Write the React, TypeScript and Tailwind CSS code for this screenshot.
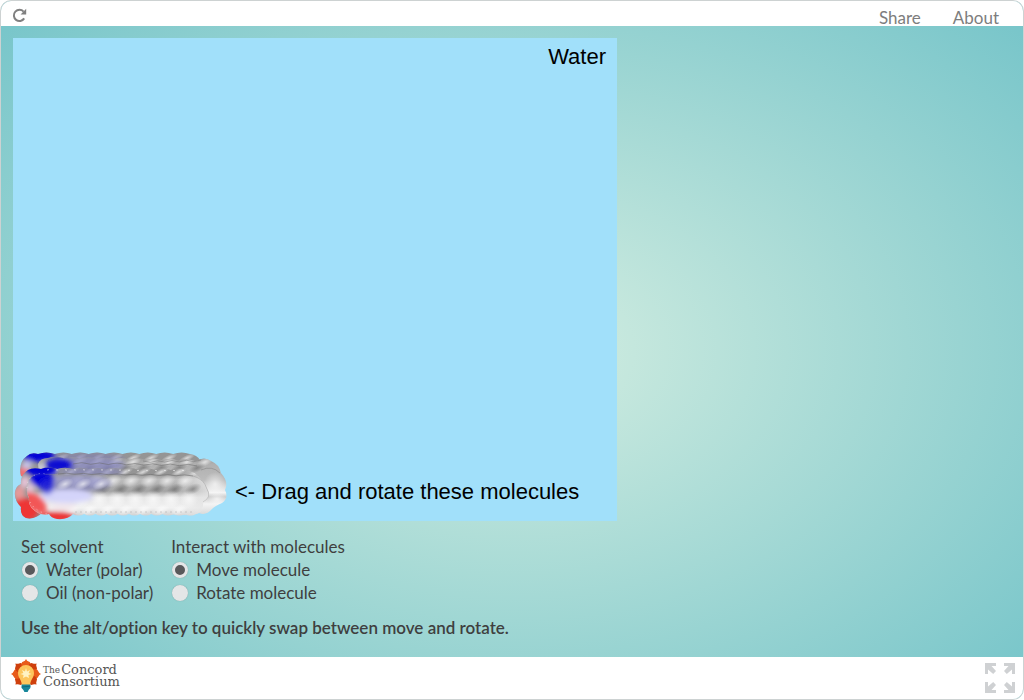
import React, { useState } from "react";

type Point = [number, number];

// Bumpy run between two points, made of small arcs.
function bumps(from: Point, to: Point, count: number, height: number) {
  const dx = (to[0] - from[0]) / count;
  const dy = (to[1] - from[1]) / count;
  return Array.from({ length: count }, () => `q${dx / 2} ${dy / 2 + height} ${dx} ${dy}`).join(" ");
}

const shapes = {
  far: `M8 26 Q5 12 14 6 Q18 2 25 4 ${bumps([25, 4], [177, 4], 9, -3)} Q184 5 187 10 L190 30 L30 34 Z`,
  back: `M25 14 Q27 8 35 8 ${bumps([35, 8], [182, 11], 9, -3)} Q192 6 198 11 Q206 14 208 23 Q216 32 212 40 Q216 48 209 53 Q202 56 199 59 Q193 66 186 63 L172 65 L30 60 Z`,
  middle: `M8 34 Q7 25 15 20 Q20 17 28 19 ${bumps([28, 19], [174, 20], 9, -3)} Q188 24 192 36 L180 60 L30 62 Q22 70 13 68 Q7 65 8 57 Q1 50 2 42 Q3 36 8 34 Z`,
  front: `M14 38 Q14 28 22 25 Q28 22 35 25 ${bumps([35, 25], [180, 26], 8, -2)} Q191 29 194 39 Q199 47 190 52 Q191 62 183 64 ${bumps([183, 64], [60, 64], 11, 3)} Q55 70 44 69 Q38 68 36 64 Q28 66 22 61 Q15 56 16 48 Q13 43 14 38 Z`,
};

function Lobes({ y, start, end, ry, fill }: { y: number; start: number; end: number; ry: number; fill: string }) {
  const items: number[] = [];
  for (let x = start; x <= end; x += 18) items.push(x);
  return (
    <>
      {items.map((x) => (
        <ellipse key={x} cx={x} cy={y} rx="9" ry={ry} fill={fill} transform={`rotate(-24 ${x} ${y})`} />
      ))}
    </>
  );
}

function Molecules() {
  return (
    <svg viewBox="0 0 216 71" className="h-[71px] w-[216px] shrink-0" role="img" aria-label="Stack of four molecules">
      <defs>
        <linearGradient id="shade" x1="0" y1="0" x2="0" y2="1">
          <stop offset="0" stopColor="#949494" />
          <stop offset="0.12" stopColor="#bdbdbd" />
          <stop offset="0.38" stopColor="#a4a4a4" />
          <stop offset="0.52" stopColor="#e6e6e6" />
          <stop offset="0.75" stopColor="#f2f2f2" />
          <stop offset="1" stopColor="#c4c4c4" />
        </linearGradient>
        <linearGradient id="shadeBack" x1="0" y1="0" x2="0" y2="1">
          <stop offset="0" stopColor="#858585" />
          <stop offset="0.2" stopColor="#b0b0b0" />
          <stop offset="0.42" stopColor="#bcbcbc" />
          <stop offset="0.6" stopColor="#f4f4f4" />
          <stop offset="0.66" stopColor="#cdcdcd" />
          <stop offset="0.76" stopColor="#f4f4f4" />
          <stop offset="1" stopColor="#c8c8c8" />
        </linearGradient>
        <linearGradient id="frontEnd" gradientUnits="userSpaceOnUse" x1="160" y1="0" x2="194" y2="0">
          <stop offset="0" stopColor="#e4e4e4" stopOpacity="0" />
          <stop offset="1" stopColor="#e4e4e4" stopOpacity="0.85" />
        </linearGradient>
        <radialGradient id="light">
          <stop offset="0" stopColor="#fff" stopOpacity="0.65" />
          <stop offset="1" stopColor="#fff" stopOpacity="0" />
        </radialGradient>
        <radialGradient id="dark">
          <stop offset="0" stopColor="#555" stopOpacity="0.5" />
          <stop offset="1" stopColor="#555" stopOpacity="0" />
        </radialGradient>
        <filter id="soft" x="-50%" y="-50%" width="200%" height="200%">
          <feGaussianBlur stdDeviation="2.5" />
        </filter>
        {Object.entries(shapes).map(([name, d]) => (
          <clipPath id={name} key={name}>
            <path d={d} />
          </clipPath>
        ))}
      </defs>

      <g clipPath="url(#far)">
        <rect width="216" height="71" fill="#959595" />
        <Lobes y={8} start={30} end={190} ry={3} fill="url(#light)" />
        <g filter="url(#soft)">
          <ellipse cx="76" cy="10" rx="36" ry="7" fill="#7c7cb4" opacity="0.65" />
          <ellipse cx="10" cy="26" rx="8" ry="9" fill="#f07070" />
          <ellipse cx="14" cy="15" rx="5" ry="4" fill="#c8c8ee" />
          <ellipse cx="26" cy="6" rx="17" ry="6" fill="#0505d8" />
        </g>
      </g>

      <g clipPath="url(#back)">
        <rect width="216" height="71" fill="url(#shadeBack)" />
        <Lobes y={12} start={48} end={200} ry={4} fill="url(#light)" />
        <Lobes y={18} start={40} end={194} ry={4} fill="url(#dark)" />
        <ellipse cx="202" cy="34" rx="11" ry="12" fill="url(#light)" />
        <ellipse cx="204" cy="49" rx="9" ry="6" fill="url(#light)" />
        <g filter="url(#soft)">
          <ellipse cx="78" cy="15" rx="34" ry="8" fill="#8080bd" opacity="0.7" />
          <ellipse cx="46" cy="15" rx="14" ry="7" fill="#0808d2" />
          <ellipse cx="28" cy="18" rx="3" ry="3" fill="#dcdcf0" />
        </g>
      </g>
      <path d={`M60 14 ${bumps([60, 14], [184, 16], 7, -3)}`} fill="none" stroke="#686868" strokeOpacity="0.5" />
      <path d={`M130 11 ${bumps([130, 11], [188, 10], 4, 3)}`} fill="none" stroke="#777" strokeOpacity="0.5" />
      <path d="M188 20 Q199 15 207 23" fill="none" stroke="#777" strokeOpacity="0.45" />

      <g clipPath="url(#middle)">
        <rect width="216" height="71" fill="#959595" />
        <rect width="216" height="71" fill="url(#frontEnd)" />
        <Lobes y={22} start={40} end={186} ry={3} fill="url(#light)" />
        <g filter="url(#soft)">
          <ellipse cx="78" cy="22" rx="32" ry="5" fill="#8585ba" opacity="0.7" />
          <ellipse cx="28" cy="20" rx="16" ry="7" fill="#0505d6" />
          <ellipse cx="12" cy="32" rx="5" ry="6" fill="#e6c4d8" />
          <ellipse cx="6" cy="43" rx="6" ry="7" fill="#e69a9a" />
          <ellipse cx="12" cy="60" rx="14" ry="12" fill="#ee3434" />
        </g>
      </g>
      <path d={`M34 20 ${bumps([34, 20], [174, 21], 14, -1)}`} fill="none" stroke="#fff" strokeOpacity="0.55" strokeDasharray="2 7" />

      <g clipPath="url(#front)">
        <rect y="24" width="216" height="45" fill="url(#shade)" />
        <rect width="216" height="71" fill="url(#frontEnd)" />
        <Lobes y={39} start={54} end={180} ry={5} fill="url(#dark)" />
        <Lobes y={31} start={64} end={184} ry={6} fill="url(#light)" />
        <Lobes y={49} start={50} end={190} ry={9} fill="url(#light)" />
        <Lobes y={60} start={58} end={180} ry={5} fill="url(#light)" />
        <g filter="url(#soft)">
          <ellipse cx="64" cy="33" rx="34" ry="8" fill="#8888c4" opacity="0.7" />
          <ellipse cx="54" cy="46" rx="26" ry="7" fill="#d4d4fa" />
          <ellipse cx="29" cy="29" rx="12" ry="8" fill="#0505d8" />
          <ellipse cx="34" cy="36" rx="7" ry="8" fill="#2020d8" opacity="0.85" />
          <ellipse cx="17" cy="39" rx="4" ry="6" fill="#e4c8da" />
          <ellipse cx="22" cy="53" rx="14" ry="8" fill="#f25656" transform="rotate(42 22 53)" />
          <ellipse cx="44" cy="67" rx="17" ry="5" fill="#ee2d2d" />
          <ellipse cx="50" cy="57" rx="13" ry="3" fill="#f1e4ea" />
        </g>
        <Lobes y={34} start={52} end={88} ry={5} fill="url(#light)" />
      </g>
      <path d="M14 38 Q14 28 22 25 Q28 22 35 25 M17 52 Q22 61 34 64" fill="none" stroke="#fff" strokeOpacity="0.5" strokeDasharray="1 4" />
      <path d={`M45 24 ${bumps([45, 24], [180, 26], 8, -2)}`} fill="none" stroke="#6d6d6d" strokeOpacity="0.55" />
      <path d="M180 26 Q191 29 194 39 Q199 47 190 52" fill="none" stroke="#999" strokeOpacity="0.35" />
      <path d="M62 62 H182" fill="none" stroke="#aaa" strokeOpacity="0.5" strokeDasharray="2 3" />
    </svg>
  );
}

function ReloadIcon() {
  return (
    <svg viewBox="0 0 15 15" className="size-[15px]" aria-hidden="true">
      <path d="M11.6 3.6 A5.6 5.6 0 1 0 12.2 10.4" fill="none" stroke="#808080" strokeWidth="2" />
      <path d="M14.2 0.8 V6.4 H8.6 Z" fill="#808080" />
    </svg>
  );
}

function FullscreenIcon() {
  const arrow = "M0 0 H11 V3 H6.5 L11 8 L8.2 11 L3 6.5 V11 H0 Z";
  return (
    <svg viewBox="0 0 30 30" className="size-[30px]" aria-hidden="true" fill="#cfd1d3">
      <path d={arrow} />
      <path d={arrow} transform="translate(30 0) scale(-1 1)" />
      <path d={arrow} transform="translate(0 30) scale(1 -1)" />
      <path d={arrow} transform="translate(30 30) scale(-1 -1)" />
    </svg>
  );
}

function BulbLogo() {
  return (
    <svg viewBox="0 0 30 34" className="h-[34px] w-[30px]" aria-hidden="true">
      {[-135, -90, -45, 0, 45, 90, 135].map((angle) => (
        <path
          key={angle}
          d="M15 15 L10.6 7.6 Q9.6 3.4 12.4 2.6 Q14.2 2 15 0 Q15.8 2 17.6 2.6 Q20.4 3.4 19.4 7.6 Z"
          fill={angle % 90 === 0 ? "#e85c1a" : "#cf400d"}
          transform={`rotate(${angle} 15 15)`}
        />
      ))}
      <path d="M15 6 A8 8 0 0 1 23 14 C23 19 19.4 20.4 19.2 26 H10.8 C10.6 20.4 7 19 7 14 A8 8 0 0 1 15 6 Z" fill="#fdc55c" />
      <path d="M15 9 L16 12.4 L19 11 L17.6 14 L20.6 15 L17.4 16 L18 19 L15 17.6 L12 19 L12.6 16 L9.4 15 L12.4 14 L11 11 L14 12.4 Z" fill="#fff3c4" />
      <path d="M10.6 25.6 H19.4 V29 L17.6 31 L16.6 33 H13.4 L12.4 31 L10.6 29 Z" fill="#17869a" />
      <path d="M10.6 28 L19.4 27.2" stroke="#0f6174" strokeWidth="0.8" />
    </svg>
  );
}

interface RadioGroupProps {
  name: string;
  title: string;
  options: string[];
  value: string;
  onChange: (value: string) => void;
}

function RadioGroup({ name, title, options, value, onChange }: RadioGroupProps) {
  return (
    <fieldset>
      <legend className="h-[23px]">{title}</legend>
      {options.map((option) => (
        <label key={option} className="flex h-[23px] items-center gap-2">
          <input
            type="radio"
            name={name}
            checked={value === option}
            onChange={() => onChange(option)}
            className="ml-px size-4 appearance-none rounded-full border-[3px] border-[#e4e6e7] bg-[#e4e6e7] shadow-[0_0_1px_rgba(90,110,110,0.6)] checked:bg-[#58595b]"
          />
          {option}
        </label>
      ))}
    </fieldset>
  );
}

export default function App() {
  const [solvent, setSolvent] = useState("Water (polar)");
  const [mode, setMode] = useState("Move molecule");

  return (
    <div className="flex min-h-screen flex-col overflow-hidden rounded-[11px] border border-[#cdd2d2] bg-[radial-gradient(ellipse_at_center,#d4eee1,#75c4c9)] font-[Lato,sans-serif] text-[17px] leading-[23px] text-[#3f3f3f]">
      <header className="flex h-[25px] items-center justify-between bg-white pr-6 pl-[11px] text-[#7d7d7d]">
        <button type="button" aria-label="Reload" className="pt-1">
          <ReloadIcon />
        </button>
        <nav className="flex gap-8 pt-[7px]">
          <a href="#share">Share</a>
          <a href="#about">About</a>
        </nav>
      </header>

      <main className="flex flex-1 flex-col items-start px-3 pt-3">
        <section className="flex aspect-[604/483] w-[604px] max-w-full flex-col justify-between bg-[#a1e0fa] font-['Liberation_Sans',sans-serif] text-[22px] leading-7 text-black">
          <p className="pt-[5px] pr-[11px] text-right">{solvent.split(" ")[0]}</p>
          <div className="flex items-center gap-[6px]">
            <Molecules />
            <p className="pt-[13px]">&lt;- Drag and rotate these molecules</p>
          </div>
        </section>

        <form className="px-2 pt-[14px]">
          <div className="flex gap-[18px]">
            <RadioGroup name="solvent" title="Set solvent" options={["Water (polar)", "Oil (non-polar)"]} value={solvent} onChange={setSolvent} />
            <RadioGroup name="mode" title="Interact with molecules" options={["Move molecule", "Rotate molecule"]} value={mode} onChange={setMode} />
          </div>
          <p className="pt-3 font-semibold [font-variant-ligatures:none]">Use the alt/option key to quickly swap between move and rotate.</p>
        </form>
      </main>

      <footer className="flex h-[42px] items-center justify-between bg-white pr-2 pl-[10px]">
        <a href="#concord" className="flex items-center gap-[2px] pb-1 font-['DejaVu_Serif',serif] text-[13px] leading-3 text-[#555]">
          <BulbLogo />
          <span className="flex flex-col">
            <span className="flex gap-px">
              <span className="text-[9px]">The</span>
              <span>Concord</span>
            </span>
            <span>Consortium</span>
          </span>
        </a>
        <button type="button" aria-label="Full screen">
          <FullscreenIcon />
        </button>
      </footer>
    </div>
  );
}
